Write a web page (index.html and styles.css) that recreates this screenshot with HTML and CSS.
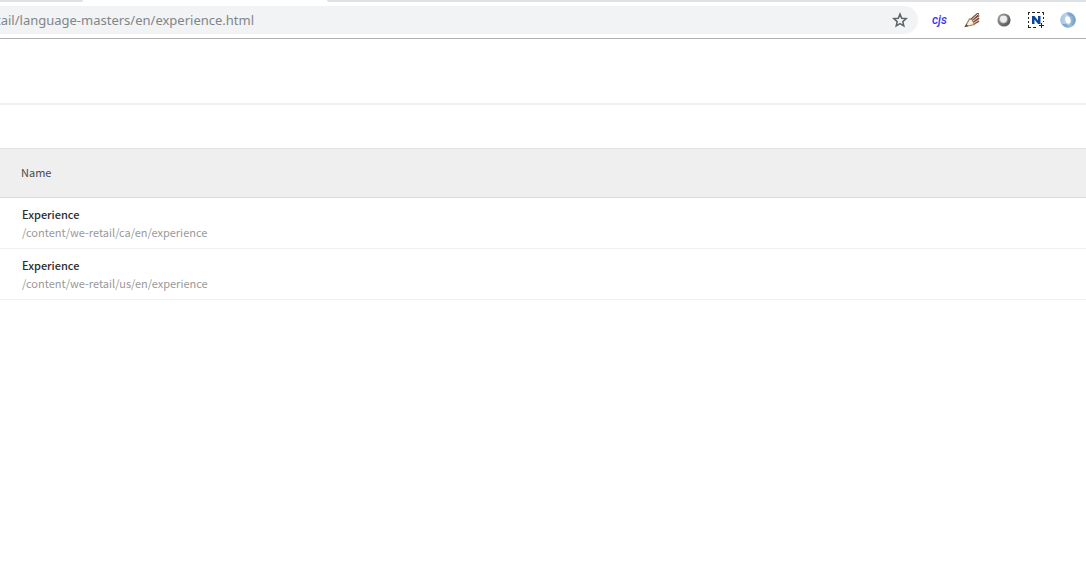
FILE: index.html
```html
<!DOCTYPE html>
<html lang="en">
<head>
<meta charset="utf-8">
<title>Experience</title>
<link rel="stylesheet" href="styles.css">
</head>
<body>
<header class="browser">
  <div class="tabs"><div class="tab tab-left"></div><div class="tab tab-active"></div><div class="tab tab-right"></div></div>
  <div class="toolbar">
    <div class="omnibox">
      <input class="address" type="text" aria-label="Address" value="tail/language-masters/en/experience.html">
      <button class="icon-button" type="button" aria-label="Bookmark this page">
        <svg width="16" height="16" viewBox="0 0 16 16"><path d="M8 2 9.700 6.200l4.500.4-3.400 3 1 4.400L8 11.700 4.200 14l1-4.400-3.400-3 4.500-.4Z" fill="none" stroke="#5f6368" stroke-width="1.500"/></svg>
      </button>
    </div>
    <nav class="extensions" aria-label="Extensions">
      <button class="icon-button cjs" type="button">cjs</button>
      <button class="icon-button" type="button" aria-label="Pencil">
        <svg width="16" height="16" viewBox="0 0 16 16"><path d="M6 7 13 1l2.500.2-1.300 2 1.500.6-1.500 1.900 1.500.8-1.500 1.700 1.300 1.600-5 2.700Z" fill="#7d4d3d"/><path d="M8 7.500 14 2M9 9l5.500-4M10 11l4.500-3" stroke="#f0dacb"/><path d="M1.200 14.500 5.500 7 8 7.500l2.500 5Z" fill="#f8efdf" stroke="#a58058" stroke-width="1.200"/><path d="m.8 15 1.500-3 2 2.300Z" fill="#594431"/></svg>
      </button>
      <button class="icon-button" type="button" aria-label="Ring">
        <svg width="16" height="16" viewBox="0 0 16 16"><defs><linearGradient id="ring" x2="1" y2="1"><stop stop-color="#aaa"/><stop offset=".5" stop-color="#777"/><stop offset="1" stop-color="#505050"/></linearGradient></defs><circle cx="8" cy="8" r="6.600" fill="url(#ring)"/><circle cx="7.500" cy="7.200" r="4" fill="#eee" stroke="#888" stroke-width=".6"/></svg>
      </button>
      <button class="icon-button" type="button" aria-label="Capture">
        <svg width="16" height="16" viewBox="0 0 16 16"><path d="M0 .5h2M4 .5h3M9 .5h3M14 .5h2M.5 0v3M.5 5v2M.5 9v2M.5 13v3M0 15.500h3M5 15.500h3M15.500 0v3M15.500 5v2M15.500 9v1M13.500 11v5M11 13.500h5" fill="none" stroke="#222"/><path d="M4 12V4h2.500L10 8.500V4h2.500v8H10L6.500 7.500V12Z" fill="#0b4698"/></svg>
      </button>
      <button class="icon-button" type="button" aria-label="Blue ring">
        <svg width="16" height="16" viewBox="0 0 16 16"><defs><linearGradient id="blue" x2="1"><stop stop-color="#a9c4df"/><stop offset=".4" stop-color="#bcd5ec"/><stop offset="1" stop-color="#6d97c2"/></linearGradient></defs><circle cx="8" cy="8" r="7.800" fill="url(#blue)"/><path d="M6 1a7 7 0 0 1 8 3l-4 .3ZM10 15a7 7 0 0 1-8-3l4-.3Z" fill="#7fa7cf"/><ellipse cx="8" cy="8" rx="2.600" ry="3.800" transform="rotate(-15 8 8)" fill="#fff"/></svg>
      </button>
    </nav>
  </div>
</header>
<main>
  <div class="page-bar"></div>
  <div class="spacer"></div>
  <table class="list">
    <thead><tr><th scope="col">Name</th></tr></thead>
    <tbody>
      <tr><td><div class="title">Experience</div><div class="path">/content/we-retail/ca/en/experience</div></td></tr>
      <tr><td><div class="title">Experience</div><div class="path">/content/we-retail/us/en/experience</div></td></tr>
    </tbody>
  </table>
</main>
</body>
</html>
```
FILE: styles.css
```css
* { box-sizing: border-box; }
body {
  margin: 0;
  background: #fff;
  font-family: "Noto Sans CJK SC", "Open Sans", sans-serif;
  overflow-x: hidden;
}
.browser { border-bottom: 1px solid #b0b0b0; }
.tabs { display: flex; height: 2px; }
.tab { background: #dee1e6; }
.tab-left { width: 83px; border-bottom-right-radius: 4px; }
.tab-active { width: 244px; background: #fff; }
.tab-right { flex: 1; border-bottom-left-radius: 4px; }
.toolbar {
  display: flex;
  align-items: center;
  gap: 13px;
  padding: 4px 10px 4px 0;
}
.omnibox {
  flex: 1;
  display: flex;
  align-items: center;
  height: 28px;
  padding-right: 10px;
  border-radius: 0 14px 14px 0;
  background: #f1f3f4;
  overflow: hidden;
}
.address {
  flex: 1;
  min-width: 0;
  margin-left: -4px;
  padding: 0;
  border: 0;
  outline: 0;
  background: transparent;
  color: #80868b;
  font: 13px/20px "Noto Sans", sans-serif;
}
.icon-button {
  display: flex;
  flex: none;
  padding: 0;
  border: 0;
  background: none;
}
.extensions { display: flex; align-items: center; gap: 16px; }
.cjs {
  justify-content: center;
  width: 17px;
  color: #3c38f0;
  font: italic 500 12px/16px Roboto, "Liberation Sans", sans-serif;
}
.page-bar { height: 66px; border-bottom: 2px solid #f0f0f0; }
.spacer { height: 43px; }
.list { width: 100%; border-collapse: separate; border-spacing: 0; }
.list th {
  height: 50px;
  padding: 0 21px 2px;
  border-top: 1px solid #e0e0e0;
  border-bottom: 1px solid #dcdcdc;
  background: #efefef;
  color: #4b4b4b;
  font-size: 11px;
  font-weight: 400;
  line-height: 18px;
  text-align: left;
}
.list td {
  padding: 7px 22px;
  border-bottom: 1px solid #f0f0f0;
  font-size: 11px;
  line-height: 18px;
}
.title { color: #2c2c2c; font-weight: 500; }
.path { color: #999; }
```
